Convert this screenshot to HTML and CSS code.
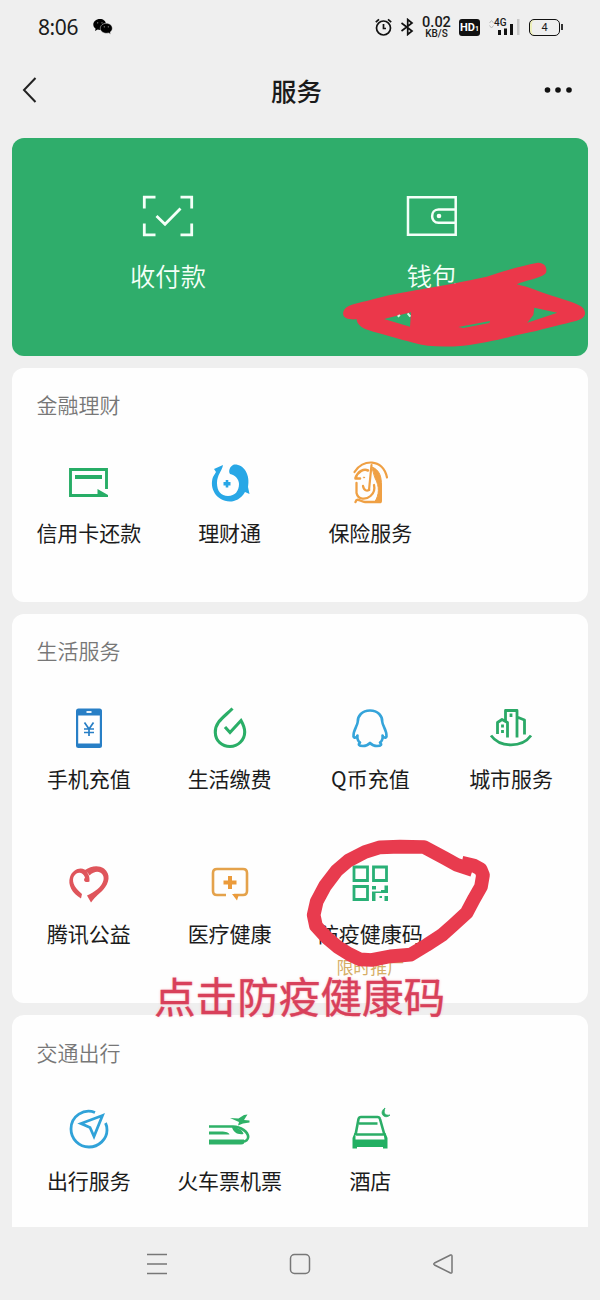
FILE: index.html
```html
<!DOCTYPE html>
<html lang="zh-CN">
<head>
<meta charset="utf-8">
<title>服务</title>
<link rel="stylesheet" href="styles.css">
</head>
<body>
<div class="screen">
  <header class="status">
    <span class="time">8:06</span>
    <svg class="wechat" width="20" height="18" viewBox="0 0 20 18">
      <path d="M7 1C3 1 .3 3.500.3 6.500c0 1.800.9 3.200 2.300 4.200L2 13l2.700-1.400c1.500.5 3 .5 4.200.1L13 6C12.800 3 10.300 1 7 1z"/>
      <path d="M13.300 5.300c-3.400 0-6 2.200-6 5s2.600 5 6 5c.8 0 1.500-.1 2.200-.3l2.200 1.300-.5-2.100c1.300-1 2.100-2.300 2.100-3.900 0-2.800-2.600-5-6-5z" stroke="#efefef" stroke-width=".5"/>
      <g fill="#aaa"><circle cx="4.700" cy="4.800" r=".6"/><circle cx="9" cy="4.800" r=".6"/><circle cx="11.300" cy="8.800" r=".6"/><circle cx="15.300" cy="8.800" r=".6"/></g>
    </svg>
    <div class="status-right">
      <svg width="17" height="18" viewBox="0 0 17 18" fill="none" stroke="#111" stroke-width="1.700"><circle cx="8.500" cy="10" r="7"/><path d="M8.500 6v4.500H11M.8 4.200L4 1.300M16.200 4.200L13 1.300"/></svg>
      <svg width="14" height="18" viewBox="0 0 14 18" fill="none" stroke="#111" stroke-width="1.700"><path d="M1.500 5l10.500 8-4.300 3.500V1.500L12 5 1.500 13"/></svg>
      <div class="speed"><span>0.02</span><small>KB/S</small></div>
      <span class="hd">HD<i>1</i></span>
      <div class="signal"><span>4G</span><svg width="32" height="18" viewBox="0 0 32 18"><path d="M1.500 5L3.500 2.500 5.500 5M1.500 7.500L3.500 10 5.500 7.500" fill="none" stroke="#bbb"/><path d="M10 12h3v5h-3zM16 10.500h3V17h-3zM22 6h3v11h-3z" fill="#111"/><path d="M29 1h2.500v16H29z" fill="#c8c8c8"/></svg></div>
      <div class="battery"><span>4</span></div>
    </div>
  </header>

  <nav class="topbar">
    <svg width="20" height="28" viewBox="0 0 20 28" fill="none" stroke="#222" stroke-width="2"><path d="M15.500 2L4 14l11.500 12"/></svg>
    <h1>服务</h1>
    <svg width="28" height="8" viewBox="0 0 28 8" fill="#111"><circle cx="3.500" cy="4" r="2.800"/><circle cx="14" cy="4" r="2.800"/><circle cx="25" cy="4" r="2.800"/></svg>
  </nav>

  <main class="content">
    <section class="hero">
      <div class="hero-item">
        <svg width="56" height="48" viewBox="-28 -24 56 48" fill="none" stroke="#f4fff8" stroke-width="2.800"><path d="M-23.700-7.500V-18.800H-12.500M12.500-18.800H23.700V-7.500M23.700 7.500V18.800H12.500M-12.500 18.800H-23.700V7.500M-11.500 0L-3 8.200 12.500-7.500"/></svg>
        <span>收付款</span>
      </div>
      <div class="hero-item">
        <svg width="56" height="48" viewBox="-28 -24 56 48" fill="none" stroke="#f4fff8" stroke-width="2.500"><path d="M-24-18.800H23.700V18.800H-24zM23.700-6.500H6.500C-2-6.500-2 6.800 6.500 6.800H23.700"/><circle cx="7" cy="0" r="2.300" fill="#f4fff8" stroke="none"/></svg>
        <span>钱包</span>
      </div>
    </section>

    <section class="card finance">
      <h2>金融理财</h2>
      <div class="grid">
        <div class="item">
          <svg viewBox="-22 -22 44 44"><path d="M17.500 6V-13.500H-18.500V12.500H12" fill="none" stroke="#27ad66" stroke-width="2.900"/><path d="M-14-8H13v4H-14zM8.500 6L19 12v2H8.500z" fill="#27ad66"/></svg>
          <span>信用卡还款</span>
        </div>
        <div class="item">
          <svg viewBox="-22 -22 44 44" fill="#28a7e6"><path d="M-16-14L-7-18C-8-12-13-8-13 0-13 8-9 13-2 13 5 13 9 8 9 1 9-4 5-8 0-9-2-12 0-17 4-18.500 14-19 20.500-8 18 4L19.500 11 15 9C11 16 5 18.500 0 18.500-14 18-21 5-17-6L-14-11z"/><path d="M-4-2h2.200v-2h2.600v2H3v3.600H.8v2h-2.600v-2H-4z" transform="translate(-2.500 1)"/></svg>
          <span>理财通</span>
        </div>
        <div class="item">
          <svg viewBox="-22 -22 44 44" fill="none" stroke="#efa044" stroke-linecap="round" stroke-linejoin="round"><path d="M-15.500-11C-8-24 13-25 17-5.500" stroke-width="2.200"/><path d="M2-16C10-13 11.500-6 11.500 3V18.500H5C9 12 10 4 5-5z" fill="#efa044" stroke-width="1"/><path d="M1.500-18L-1 7" stroke-width="2.200"/><path d="M-14.500-5C-12-12-6-14.500-2-12.500M-14.500-4.500H-10" stroke-width="2.600"/><path d="M-13.500 0V10C-12 17-4 17 .5 13 4 10 5 6 4 2M-7 3C-6 8-3 8-.8 7" stroke-width="2.300"/><path d="M-14.500 19C-13 14-9 19-5 19H10.500" stroke-width="2.400"/><circle cx="-6" cy="-5.500" r=".6"/></svg>
          <span>保险服务</span>
        </div>
      </div>
    </section>

    <section class="card life">
      <h2>生活服务</h2>
      <div class="grid">
        <div class="item">
          <svg viewBox="-22 -22 44 44"><rect x="-13" y="-20.500" width="26" height="39.500" rx="2.500" fill="#287fc6"/><path d="M-10.800-13.500h21.600v28h-21.600z" fill="#fff"/><path d="M-2.500-17h5" stroke="#fff" stroke-width="1.800"/><path d="M-4.500-6.500L0 0l4.500-6.500M0-1V7M-5 0H5M-5 3.500H5" fill="none" stroke="#287fc6" stroke-width="1.700"/></svg>
          <span>手机充值</span>
        </div>
        <div class="item">
          <svg viewBox="-22 -22 44 44" fill="none" stroke="#2aae67" stroke-width="3.100"><path d="M2.500-20.500C-6-12-15-7-14.700 3.500-14.500 12-8 17.500 0 17.500S14.700 11 14.700 3C14.700-1.500 13-5 11-8.500L0 3.500-5-2"/></svg>
          <span>生活缴费</span>
        </div>
        <div class="item">
          <svg viewBox="-22 -22 44 44" fill="none" stroke="#35a4da" stroke-width="2.600" stroke-linejoin="round"><path d="M0-18.500C8-18.500 12.500-13 12.300-7 12.500-3 17 1 16.500 7.500c-.5 2-3.500 1-4-1 .5 3-.5 5.500-2.500 7 2 2 1.500 3.500-3 3.500-3.500 0-5-1-7-3-2 2-3.500 3-7 3-4.500 0-5-1.500-3-3.500-2-1.500-3-4-2.500-7-.5 2-3.500 3-4 1C-17 1-12.500-3-12.300-7-12.500-13-8-18.500 0-18.500z"/></svg>
          <span>Q币充值</span>
        </div>
        <div class="item">
          <svg viewBox="-22 -22 44 44" fill="none" stroke="#2ba967" stroke-width="2.800" stroke-linejoin="round"><path d="M-13.500 5V-6.500L-9-9.500-3.500-6.500V8.500M-5.500-8.500V-18.500H6V8.500M6-12L13.500-9V5.500M-20 6.500C-11 19 11 19 20 6.500"/><path d="M0-15.500v3.500M-8.500-4.500v3M-8.500 1v3" stroke-width="2.800"/></svg>
          <span>城市服务</span>
        </div>
        <div class="item">
          <svg viewBox="-22 -22 44 44"><path d="M-8 14.500C-17 9-21.500 1-19-7-16-16-5-18.500-1.500-11 .5-8 .5-6 .5-2.500-3.500-1-6.500-3-4-6.500-6-12.500-12.500-13-15.500-7-17.500-1-13 5-7 10zM-4-14C2-18 9-19.500 15-15.500 22-10 20.500-1 14 6 10 10 7 12 2 18.500L-2 11.500C5 8.500 13 3 14.500-4 16-11 8-16 .5-8.500-1-11-2-12.500-4-14z" fill="#df555b"/></svg>
          <span>腾讯公益</span>
        </div>
        <div class="item">
          <svg viewBox="-22 -22 44 44"><path d="M-4 11h-9c-2.500 0-4-1.500-4-4v-18c0-2.500 1.500-4 4-4h26c2.500 0 4 1.500 4 4V7c0 2.500-1.500 4-4 4H4" fill="none" stroke="#e4a24b" stroke-width="2.600"/><path d="M-2-8h4v4.500h4.500v4H2V5h-4V.5h-4.500v-4H-2zM2 10h7l-2 6.500z" fill="#eb9b3b"/></svg>
          <span>医疗健康</span>
        </div>
        <div class="item">
          <svg viewBox="-22 -22 44 44"><path d="M-16-17H-2.500V-3.500H-16zM3.500-17H16.500V-3.500H3.500zM-16 2.500H-2.500V15.500H-16z" fill="none" stroke="#29b076" stroke-width="2.800"/><path d="M2 2h4v3.500H2zM14.500 1.500H18V9H5.500v8H2V7.500h9V6h3.500zM9.500 12H12v2H9.500zM14.500 12H18v5h-3.500z" fill="#29b076"/></svg>
          <span>防疫健康码</span><em class="promo">限时推广</em>
        </div>
      </div>
    </section>

    <section class="card travel">
      <h2>交通出行</h2>
      <div class="grid">
        <div class="item">
          <svg viewBox="-22 -22 44 44" fill="none" stroke="#30a2d8" stroke-width="2.800"><path d="M6-16.500C-5-21-18-13-18 0c0 10 8 18 18 18S18 10 18 1C18-2 17.500-4 16.500-6"/><path d="M13.500-13.500L-8-5.500 1-1.500 5 7.500z"/></svg>
          <span>出行服务</span>
        </div>
        <div class="item">
          <svg viewBox="-22 -22 44 44" fill="#2eb167"><path d="M-21-2.500H3C11-2.500 18 3 18.200 8 18 11 16 12.500 12 13" fill="none" stroke="#2eb167" stroke-width="2.600"/><path d="M-21 10.500H14V14.500Q13 15.500 11 15.500H-21zM-21 2.500H-9C-4 2.500-1 3.500-.5 5.500H-21zM2-2C9-2 13 2 13.500 5 8 6 3 3.500 2-2zM0-11l8.500.5L14-14l3.500-.5L14-9l5.500.5v2L13-5.500 8-3.500 9-7z"/></svg>
          <span>火车票机票</span>
        </div>
        <div class="item">
          <svg viewBox="-22 -22 44 44"><path d="M-14.500 6L-11.500-10Q-11-12-9-12H7.500Q9.500-12 10-10L14.500 6M-11-5.500H7.500M-14 5.500H14" fill="none" stroke="#2bad67" stroke-width="2.600"/><path d="M-14.500 4h-1L-17.500 9v10.500H-13V18H13v1.500h4.500V9L15.500 4h-2L14.500 10.500h-29z" fill="#22af62"/><path d="M15-21c-2 5 0 8 5 7-5 5-12-2-5-7z" fill="#2bad67" stroke="#2bad67" stroke-width=".8"/></svg>
          <span>酒店</span>
        </div>
      </div>
    </section>
  </main>

  <footer class="navbar">
    <svg width="22" height="22" viewBox="-11 -11 22 22"><path d="M-10-9.500H10M-10 0H10M-10 9.500H10"/></svg>
    <svg width="22" height="22" viewBox="-11 -11 22 22"><rect x="-9.500" y="-9.500" width="19" height="19" rx="4"/></svg>
    <svg width="22" height="22" viewBox="-11 -11 22 22"><path d="M7.500-9Q9-9.500 9-8V8Q9 9.500 7.500 9L-8.500 1Q-10 0-8.500-1z"/></svg>
  </footer>

  <svg class="marks" width="600" height="1300" viewBox="0 0 600 1300">
    <g transform="translate(330 170) scale(.33333)">
      <path fill="#eb374a" fill-rule="evenodd" d="M40 425C45 405 80 400 110 393 170 375 220 368 260 360 350 345 400 335 470 320 530 300 580 287 620 279 648 275 655 302 645 312 630 325 590 330 560 343 600 352 620 362 650 372 700 388 740 400 755 410 772 425 768 445 740 452 700 462 650 475 600 487 520 505 470 518 400 527 340 532 290 530 250 518 200 505 150 490 130 485 100 478 80 465 80 448 55 450 35 445 40 425zM162 447L240 470 243 427zM613 413L610 435 592 458 682 428zM385 471L400 474 478 459 480 453z"/>
      <path d="M203 440l7-5M233 430l8 10" stroke="#d9f2df" stroke-width="6"/>
    </g>
    <path transform="translate(290 830) scale(.33333)" fill="none" stroke="#e83b4e" stroke-width="41" stroke-linejoin="round" d="M548 120L500 104 465 85 402 51 330 50 270 52 225 66 175 92 140 122 105 168 80 215 71 255 78 288 108 321 142 350 177 372 210 388 245 390 300 379 362 374 410 345 455 316 490 285 530 248 553 205 573 170 579 135 572 118 550 106 515 98"/>
  </svg>
  <div class="callout">点击防疫健康码</div>
</div>
</body>
</html>
```
FILE: styles.css
```css
* { box-sizing: border-box; }
body {
  margin: 0;
  font-family: "Noto Sans CJK SC", sans-serif;
  color: #1b1b1b;
  background: #efefef;
}
.screen {
  position: relative;
  width: 600px;
  height: 1300px;
  overflow: hidden;
  display: flex;
  flex-direction: column;
  background: #efefef;
}
svg { display: block; flex: none; }

.status {
  display: flex;
  align-items: center;
  height: 54px;
  padding: 0 38px;
}
.time {
  width: 55px;
  font: 21px/30px "Noto Sans", sans-serif;
  letter-spacing: -.4px;
}
.status-right {
  margin-left: auto;
  display: flex;
  align-items: center;
  gap: 8px;
}
.speed {
  width: 29px;
  display: flex;
  flex-direction: column;
  align-items: center;
  font-family: Roboto, sans-serif;
  font-weight: 500;
}
.speed span { font-size: 14.500px; line-height: 13px; }
.speed small { font-size: 10px; line-height: 10px; }
.hd {
  width: 21px;
  height: 17px;
  border-radius: 3px;
  background: #111;
  color: #fff;
  font: bold 11px/17px Roboto, sans-serif;
  text-align: center;
}
.hd i { font-size: 7px; font-style: normal; }
.signal { position: relative; }
.signal span {
  position: absolute;
  left: 6px;
  top: 0;
  font: 500 10px/10px Roboto, sans-serif;
}
.battery {
  position: relative;
  width: 31px;
  height: 17px;
  margin: 0 2px 0 1px;
  border: 1.500px solid #111;
  border-radius: 5px;
  box-shadow: inset 2px 0 #eef0bb;
  font: 11px/15px Roboto, sans-serif;
  text-align: center;
}
.battery::after {
  content: "";
  position: absolute;
  right: -4px;
  top: 4px;
  width: 2px;
  height: 6px;
  background: #333;
}

.topbar {
  display: flex;
  align-items: center;
  justify-content: space-between;
  height: 84px;
  padding: 0 28px 12px 20px;
}
.topbar h1 {
  margin: 0 0 0 9px;
  font-size: 25.500px;
  line-height: 36px;
  font-weight: 500;
}

.content {
  display: flex;
  flex-direction: column;
  gap: 12px;
  padding: 0 12px;
  height: 1089px;
  overflow: hidden;
}
.hero {
  flex: none;
  display: grid;
  grid-template-columns: 264px 264px;
  padding: 54px 24px 0;
  height: 217.500px;
  border-radius: 12px;
  background: #2fad6b;
  color: #f4fff8;
}
.hero-item {
  display: flex;
  flex-direction: column;
  align-items: center;
  gap: 17px;
  font-size: 25.300px;
  line-height: 36px;
  font-weight: 350;
}

.card {
  flex: none;
  height: 234px;
  padding: 21px 6.500px 0;
  border-radius: 12px;
  background: #fefefe;
}
.life { height: 389.500px; }
.card h2 {
  margin: 0 0 42px 18px;
  font-size: 21px;
  line-height: 30px;
  font-weight: 350;
  color: #777;
}
.travel h2 { margin-bottom: 40px; }
.travel { padding-top: 22px; }
.grid {
  display: grid;
  grid-template-columns: repeat(4, 1fr);
  row-gap: 67px;
}
.item {
  position: relative;
  display: flex;
  flex-direction: column;
  align-items: center;
  gap: 12.500px;
  height: 88px;
  font-size: 21px;
  line-height: 30px;
  white-space: nowrap;
}
.travel .item { gap: 14px; }
.item svg { width: 44px; height: 44px; }
.promo {
  position: absolute;
  top: 93px;
  font-size: 17px;
  line-height: 24px;
  font-style: normal;
  color: #d6ae66;
}

.navbar {
  display: flex;
  justify-content: space-between;
  align-items: center;
  height: 73px;
  padding: 0 146px;
}
.navbar svg { fill: none; stroke: #777; stroke-width: 1.500; }

.marks { position: absolute; left: 0; top: 0; }
.callout {
  position: absolute;
  left: 154px;
  top: 965px;
  font-size: 41.600px;
  line-height: 60px;
  white-space: nowrap;
  color: #d8405a;
  -webkit-text-stroke: .4px #d8405a;
  text-shadow: 0 0 3px #fbb9c0;
}
```
